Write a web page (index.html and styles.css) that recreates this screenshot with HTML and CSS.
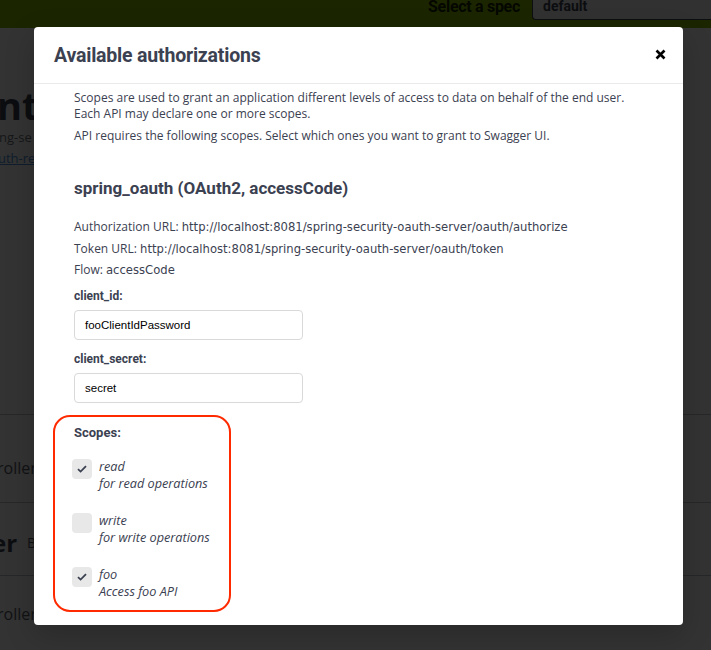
FILE: index.html
```html
<!DOCTYPE html>
<html>
<head>
<meta charset="utf-8">
<link rel="stylesheet" href="styles.css">
</head>
<body>
<div class="page">
  <header class="topbar">
    <span class="spec-label">Select a spec</span>
    <div class="spec-select">default</div>
  </header>
  <div class="info">
    <div class="info-title">nt</div>
    <div class="info-url">ng-se</div>
    <a class="info-link">uth-res</a>
  </div>
  <div class="ops">
    <div class="op-row op-row-1"><span class="op-text">roller</span></div>
    <div class="op-row op-row-2"><span class="op-tag">er</span><span class="op-desc">Ba</span></div>
    <div class="op-row op-row-3"><span class="op-text">roller</span></div>
  </div>
</div>
<div class="modal">
  <div class="modal-header">
    <h3 class="modal-title">Available authorizations</h3>
    <button class="close-btn" aria-label="close">
      <svg width="11" height="11" viewBox="0 0 11 11"><path d="M1.5 1.5 L9.5 9.5 M9.5 1.5 L1.5 9.5" stroke="#000" stroke-width="2.6" stroke-linecap="butt"/></svg>
    </button>
  </div>
  <div class="modal-body">
    <p class="desc">Scopes are used to grant an application different levels of access to data on behalf of the end user. Each API may declare one or more scopes.</p>
    <p class="desc desc-2">API requires the following scopes. Select which ones you want to grant to Swagger UI.</p>
    <h4 class="scheme-title">spring_oauth (OAuth2, accessCode)</h4>
    <p class="meta">Authorization URL: <code>http://localhost:8081/spring-security-oauth-server/oauth/authorize</code></p>
    <p class="meta">Token URL: <code>http://localhost:8081/spring-security-oauth-server/oauth/token</code></p>
    <p class="meta">Flow: <code>accessCode</code></p>
    <label class="field-label">client_id:</label>
    <div class="input">fooClientIdPassword</div>
    <label class="field-label">client_secret:</label>
    <div class="input">secret</div>
    <div class="scopes">
      <div class="field-label scopes-label">Scopes:</div>
      <div class="scope">
        <span class="check on"><svg width="10" height="8" viewBox="0 0 10 8"><path d="M1 4.2 L3.6 6.6 L9 1.2" fill="none" stroke="#3b4151" stroke-width="1.8"/></svg></span>
        <div class="scope-text"><div>read</div><div>for read operations</div></div>
      </div>
      <div class="scope">
        <span class="check"></span>
        <div class="scope-text"><div>write</div><div>for write operations</div></div>
      </div>
      <div class="scope">
        <span class="check on"><svg width="10" height="8" viewBox="0 0 10 8"><path d="M1 4.2 L3.6 6.6 L9 1.2" fill="none" stroke="#3b4151" stroke-width="1.8"/></svg></span>
        <div class="scope-text"><div>foo</div><div>Access foo API</div></div>
      </div>
    </div>
  </div>
  <div class="highlight"></div>
</div>
</body>
</html>
```
FILE: styles.css
```css
html, body {
  margin: 0;
  padding: 0;
}
body {
  width: 711px;
  height: 650px;
  overflow: hidden;
  position: relative;
  background-color: #333333;
  font-family: "Open Sans", sans-serif;
  color: #0c0d10;
}
/* background page, shown dimmed behind the modal (colours pre-darkened) */
.page {
  width: 711px;
}
.topbar {
  height: 28px;
  background-color: rgb(27, 38, 1);
  display: flex;
  align-items: flex-start;
  justify-content: flex-end;
  overflow: hidden;
}
.spec-label {
  font-family: "Roboto", sans-serif;
  font-weight: 700;
  font-size: 16px;
  color: #050700;
  margin-top: -3px;
  margin-right: 12px;
  letter-spacing: -0.3px;
}
.spec-select {
  width: 180px;
  height: 20px;
  margin-right: -1px;
  background: #313131;
  border: 1px solid #0d0e10;
  border-top: none;
  border-radius: 0 0 0 4px;
  font-family: "Roboto", sans-serif;
  font-weight: 700;
  font-size: 14px;
  color: #0c0d10;
  padding-left: 10px;
  line-height: 12px;
  box-sizing: border-box;
}
.info {
  height: 386px;
  padding-top: 57px;
  box-sizing: border-box;
}
.info-title {
  font-family: "Open Sans", sans-serif;
  font-weight: 700;
  font-size: 38px;
  line-height: 40px;
  height: 40px;
  margin-left: -3px;
  color: #0c0d10;
}
.info-url {
  font-size: 13px;
  margin-left: -1px;
  margin-top: 2px;
  line-height: 20px;
  color: #161719;
}
.info-link {
  display: block;
  font-size: 13px;
  color: #0f1d2d;
  text-decoration: underline;
  line-height: 22px;
  margin-left: -2px;
}
.ops {
  border-top: 1px solid #262729;
}
.op-row {
  border-bottom: 1px solid #262729;
  display: flex;
  align-items: flex-start;
  font-size: 16px;
  line-height: 20px;
  box-sizing: border-box;
  color: #111214;
}
.op-row-1 {
  height: 88px;
  padding-top: 43px;
}
.op-row-2 {
  height: 73px;
  padding-top: 27px;
}
.op-row-3 {
  height: 80px;
  padding-top: 28px;
}
.op-text {
  margin-left: -3px;
}
.op-tag {
  font-family: "Open Sans", sans-serif;
  font-weight: 700;
  font-size: 24px;
  margin-left: -8px;
  margin-right: 10px;
  line-height: 26px;
  color: #0c0d10;
}
.op-desc {
  font-size: 14px;
  line-height: 26px;
}
/* modal */
.modal {
  position: absolute;
  left: 34px;
  top: 27px;
  width: 649px;
  height: 598px;
  background: #fff;
  border-radius: 4px;
  box-shadow: 0 10px 30px rgba(0, 0, 0, 0.2);
  box-sizing: border-box;
  color: #3b4151;
}
.modal-header {
  height: 57px;
  border-bottom: 1px solid #ebebeb;
  display: flex;
  align-items: center;
  justify-content: space-between;
  padding: 0 17px 0 20px;
  box-sizing: border-box;
}
.modal-title {
  margin: 0;
  font-family: "Roboto", sans-serif;
  font-weight: 700;
  font-size: 19.5px;
  color: #3b4151;
  letter-spacing: -0.2px;
  margin-top: 1px;
}
.close-btn {
  border: none;
  background: none;
  padding: 0;
  width: 11px;
  height: 11px;
  display: flex;
  margin-top: -2px;
}
.modal-body {
  padding: 6px 40px 0 40px;
}
.desc {
  margin: 0;
  font-size: 12px;
  line-height: 16px;
}
.desc-2 {
  margin-top: 6px;
}
.scheme-title {
  margin: 33px 0 0 0;
  font-family: "Roboto", sans-serif;
  font-weight: 700;
  font-size: 17px;
  line-height: 22px;
}
.meta {
  margin: 20px 0 0 0;
  font-size: 12px;
  line-height: 16px;
}
.meta + .meta {
  margin-top: 5.5px;
}
.meta code {
  font-family: "DejaVu Sans", sans-serif;
  font-size: 11.6px;
}
.field-label {
  display: block;
  font-family: "Roboto", sans-serif;
  font-weight: 700;
  font-size: 12px;
  line-height: 16px;
  margin-top: 10px;
}
.input {
  width: 229px;
  height: 30px;
  margin-top: 6px;
  border: 1px solid #d9d9d9;
  border-radius: 4px;
  box-sizing: border-box;
  font-family: "Liberation Sans", sans-serif;
  font-size: 11.5px;
  line-height: 28px;
  padding-left: 10px;
  color: #000;
}
.input + .field-label {
  margin-top: 11px;
}
.scopes {
  margin-top: 22px;
}
.scopes-label {
  font-size: 13px;
  margin-top: 0;
}
.scope {
  display: flex;
  align-items: flex-start;
  margin-top: 18px;
  height: 38px;
}
.scope + .scope {
  margin-top: 16px;
}
.check {
  width: 20px;
  height: 20px;
  background: #e8e8e8;
  border-radius: 4px;
  margin-left: -2px;
  display: flex;
  align-items: center;
  justify-content: center;
  flex: none;
}
.scope-text {
  margin-left: 7px;
  margin-top: -1px;
  font-style: italic;
  font-size: 12.7px;
  line-height: 17px;
}
.highlight {
  position: absolute;
  left: 19px;
  top: 388px;
  width: 178px;
  height: 197px;
  border: 2.5px solid #ff2a00;
  border-radius: 17px;
  box-sizing: border-box;
}
```
